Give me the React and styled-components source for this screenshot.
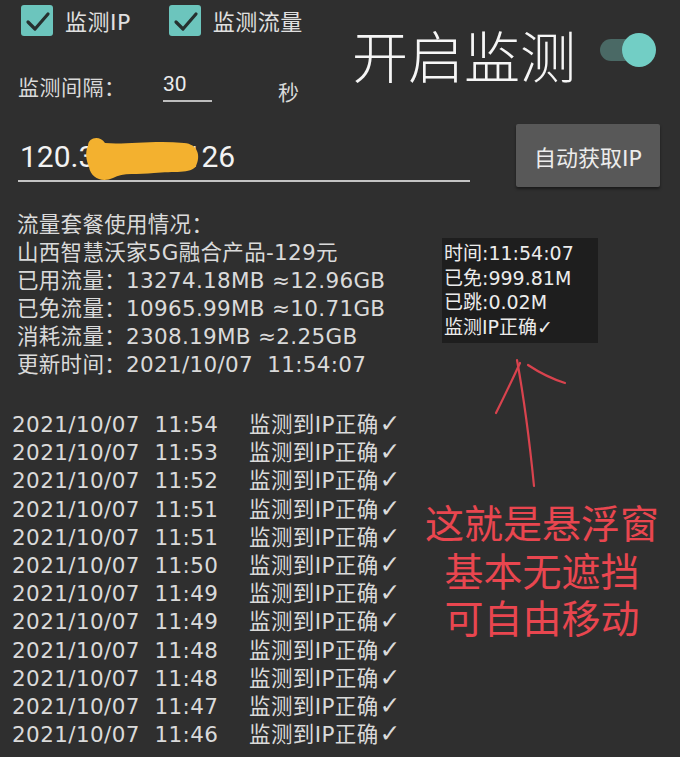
import React from 'react'
import styled, { createGlobalStyle } from 'styled-components'

const GlobalStyle = createGlobalStyle`
    body {
        margin: 0;
        background: #2f2f2f;
    }
`

const Page = styled.div`
    width: 680px;
    height: 757px;
    overflow: hidden;
    background: #2f2f2f;
    color: #dadada;
    font-family: "DejaVu Sans", "Noto Sans CJK SC", sans-serif;
`

const Header = styled.header`
    display: flex;
    height: 110px;
`

const Controls = styled.div`
    width: 352px;
    display: flex;
    flex-direction: column;
`

const OptionsRow = styled.div`
    display: flex;
    align-items: center;
    height: 40px;
`

const Option = styled.label`
    display: flex;
    align-items: center;
    margin-left: ${p => p.offset}px;
`

const CheckBox = styled.span`
    width: 32px;
    height: 31px;
    border-radius: 3px;
    background: #6cc5bd;
    display: flex;
    align-items: center;
    justify-content: center;
`

const OptionLabel = styled.span`
    margin-left: 12px;
    font-size: 22px;
    letter-spacing: 0.5px;
    color: #e0e0e0;
`

const IntervalRow = styled.div`
    display: flex;
    align-items: center;
    height: 36px;
    margin-top: 28px;
    padding-left: 18px;
`

const FieldLabel = styled.span`
    font-size: 21px;
    letter-spacing: 0.5px;
    width: 145px;
`

const IntervalInput = styled.span`
    width: 49px;
    height: 32px;
    line-height: 32px;
    border-bottom: 2px solid #bdbdbd;
    font-family: Roboto, sans-serif;
    font-size: 21px;
    color: #ececec;
    align-self: flex-start;
`

const Unit = styled.span`
    align-self: flex-end;
    margin-left: 66px;
    margin-bottom: 2px;
    font-size: 21px;
    line-height: 22px;
    font-family: "Noto Sans CJK SC", sans-serif;
`

const Power = styled.div`
    display: flex;
    align-items: center;
    height: 110px;
`

const PowerTitle = styled.h1`
    margin: 0 0 2px;
    font-family: "Noto Sans CJK SC", sans-serif;
    font-weight: 200;
    font-size: 56px;
    line-height: 56px;
    color: #f6f6f6;
`

const Switch = styled.div`
    position: relative;
    width: 56px;
    height: 34px;
    margin-left: 24px;
    margin-bottom: 10px;
`

const SwitchTrack = styled.div`
    margin-top: 6px;
    width: 52px;
    height: 22px;
    border-radius: 11px;
    background: #4a6965;
`

const SwitchThumb = styled.div`
    position: absolute;
    top: 0;
    right: 0;
    width: 34px;
    height: 34px;
    border-radius: 50%;
    background: #72cec5;
`

const IpRow = styled.div`
    display: flex;
    align-items: flex-start;
    height: 86px;
`

const IpField = styled.div`
    position: relative;
    margin-left: 18px;
    width: 452px;
    padding-top: 29px;
    padding-bottom: 5px;
    border-bottom: 2px solid #c4c4c4;
`

const IpText = styled.span`
    display: block;
    padding-left: 2px;
    font-family: Roboto, sans-serif;
    font-size: 30px;
    line-height: 36px;
    color: #f2f2f2;
    white-space: pre;
`

const Mask = styled.svg`
    position: absolute;
    left: 62px;
    top: 24px;
`

const FetchButton = styled.button`
    margin-top: 14px;
    margin-left: 46px;
    width: 144px;
    height: 63px;
    border: none;
    border-radius: 2px;
    background: #585858;
    box-shadow: 0 2px 3px rgba(0, 0, 0, 0.45);
    color: #ececec;
    font-family: "DejaVu Sans", "Noto Sans CJK SC", sans-serif;
    font-size: 22px;
`

const Main = styled.main`
    display: grid;
    grid-template-columns: 420px 244px;
`

const LeftCol = styled.div`
    padding-top: 15px;
`

const Usage = styled.div`
    padding-left: 17px;
    font-size: 21.5px;
    line-height: 28px;
    letter-spacing: 0.3px;
    white-space: pre;
`

const Log = styled.div`
    margin-top: 32px;
    font-size: 21.5px;
    line-height: 28.2px;
    letter-spacing: 0.4px;
`

const LogRow = styled.div`
    display: grid;
    grid-template-columns: 237px auto;
    padding-left: 12px;
    white-space: pre;
`

const Tick = styled.span`
    font-size: 25px;
    line-height: 20px;
    margin-left: 1px;
`

const RightCol = styled.div`
    display: flex;
    flex-direction: column;
`

const FloatWindow = styled.div`
    margin-top: 42px;
    margin-left: 22px;
    width: 156px;
    height: 105px;
    box-sizing: border-box;
    padding: 3px 0 4px 2px;
    background: #1e1e1e;
    color: #ececec;
    font-size: 19px;
    line-height: 24.5px;
    white-space: nowrap;
`

const Arrow = styled.svg`
    margin-top: 12px;
    display: block;
`

const Note = styled.div`
    margin-top: 8px;
    text-align: center;
    font-family: "Noto Sans CJK SC", sans-serif;
    font-size: 39px;
    line-height: 47.5px;
    color: #e9464f;
`

const usage = [
    '流量套餐使用情况：',
    '山西智慧沃家5G融合产品-129元',
    '已用流量：13274.18MB ≈12.96GB',
    '已免流量：10965.99MB ≈10.71GB',
    '消耗流量：2308.19MB ≈2.25GB',
    '更新时间：2021/10/07  11:54:07',
]

const logTimes = ['11:54', '11:53', '11:52', '11:51', '11:51', '11:50', '11:49', '11:49', '11:48', '11:48', '11:47', '11:46']

const floatLines = ['时间:11:54:07', '已免:999.81M', '已跳:0.02M', '监测IP正确✓']

const Check = () => (
    <svg width="32" height="31" viewBox="0 0 32 31">
        <path d="M7 17 L14 24 L27 9" fill="none" stroke="#26302f" strokeWidth="3.2" strokeLinecap="round" strokeLinejoin="round" />
    </svg>
)

const App = () => (
    <Page>
        <GlobalStyle />
        <Header>
            <Controls>
                <OptionsRow>
                    <Option offset={21}>
                        <CheckBox><Check /></CheckBox>
                        <OptionLabel>监测IP</OptionLabel>
                    </Option>
                    <Option offset={38}>
                        <CheckBox><Check /></CheckBox>
                        <OptionLabel>监测流量</OptionLabel>
                    </Option>
                </OptionsRow>
                <IntervalRow>
                    <FieldLabel>监测间隔：</FieldLabel>
                    <IntervalInput>30</IntervalInput>
                    <Unit>秒</Unit>
                </IntervalRow>
            </Controls>
            <Power>
                <PowerTitle>开启监测</PowerTitle>
                <Switch>
                    <SwitchTrack />
                    <SwitchThumb />
                </Switch>
            </Power>
        </Header>
        <IpRow>
            <IpField>
                <IpText>{'120.3' + '\u00a0'.repeat(12) + '126'}</IpText>
                <Mask width="124" height="50" viewBox="0 0 124 50">
                    <path
                        d="M8 12 C 8 3, 20 1, 25 9 C 44 11, 74 6, 104 9 C 118 10, 121 22, 116 32 C 111 40, 94 37, 74 39 C 58 41, 43 38, 33 44 C 22 49, 11 44, 9 33 C 6 26, 5 18, 8 12 Z"
                        fill="#f3b12f"
                    />
                </Mask>
            </IpField>
            <FetchButton>自动获取IP</FetchButton>
        </IpRow>
        <Main>
            <LeftCol>
                <Usage>
                    {usage.map((line, i) => <div key={i}>{line}</div>)}
                </Usage>
                <Log>
                    {logTimes.map((t, i) => (
                        <LogRow key={i}>
                            <span>{`2021/10/07  ${t}`}</span>
                            <span>监测到IP正确<Tick>✓</Tick></span>
                        </LogRow>
                    ))}
                </Log>
            </LeftCol>
            <RightCol>
                <FloatWindow>
                    {floatLines.map((line, i) => <div key={i}>{line}</div>)}
                </FloatWindow>
                <Arrow width="244" height="135" viewBox="0 0 244 135">
                    <g fill="none" stroke="#d9434e" strokeWidth="2.2" strokeLinecap="round">
                        <path d="M97 5 Q 107 60 114 131" />
                        <path d="M100 8 Q 88 34 76 58" />
                        <path d="M108 10 Q 126 22 145 28" />
                    </g>
                </Arrow>
                <Note>
                    <div>这就是悬浮窗</div>
                    <div>基本无遮挡</div>
                    <div>可自由移动</div>
                </Note>
            </RightCol>
        </Main>
    </Page>
)

export default App
